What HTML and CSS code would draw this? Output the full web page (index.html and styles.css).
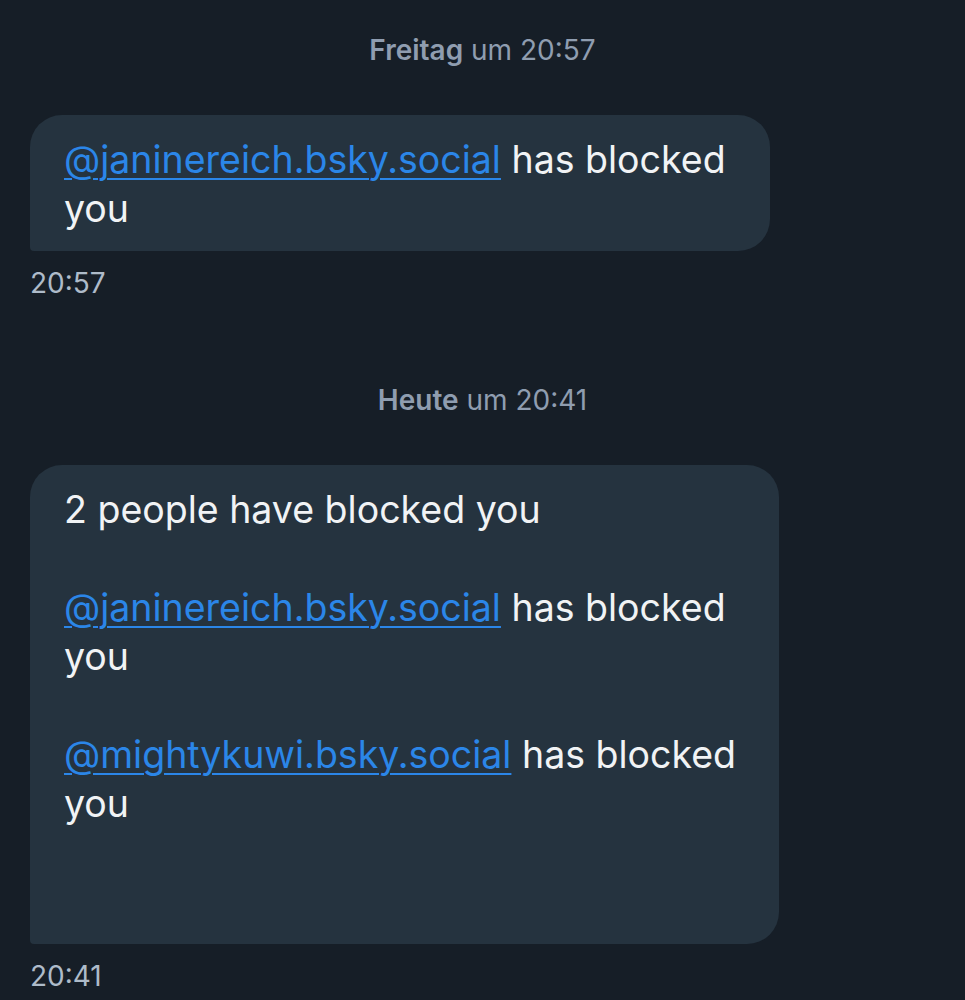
FILE: index.html
```html
<!DOCTYPE html>
<html>
<head>
  <meta charset="utf-8">
  <title>Chat</title>
  <meta name="viewport" content="width=device-width, initial-scale=1">
  <link rel="stylesheet" href="styles.css">
</head>
<body>
  <div class="chat">
    <div class="day">
      <p class="date"><b>Freitag</b> um 20:57</p>
      <div class="bubble bubble-short">
        <p class="msg"><a href="#" class="mention">@janinereich.bsky.social</a> has blocked you</p>
      </div>
      <p class="time">20:57</p>
    </div>
    <div class="day">
      <p class="date"><b>Heute</b> um 20:41</p>
      <div class="bubble">
        <p class="msg">2 people have blocked you<br><br><a href="#" class="mention">@janinereich.bsky.social</a> has blocked you<br><br><a href="#" class="mention">@mightykuwi.bsky.social</a> has blocked you<br><br><br></p>
      </div>
      <p class="time">20:41</p>
    </div>
  </div>
</body>
</html>
```

FILE: styles.css
```css
html {
  font-family: Inter, "Noto Sans", sans-serif;
  background-color: #161e27;
}
body {
  margin: 0;
}
p {
  margin: 0;
}
.chat {
  padding: 28px 30px 0 30px;
}
.day {
  margin-bottom: 80px;
}
.day:last-child {
  margin-bottom: 0;
}
.date {
  font-size: 28px;
  line-height: 44px;
  text-align: center;
  color: #8f9db0;
  margin-bottom: 43px;
}
.date b {
  font-weight: 600;
}
.bubble {
  width: fit-content;
  max-width: 749px;
  box-sizing: border-box;
  padding: 20px 38px 18px 34px;
  background-color: #25333f;
  border-radius: 32px 32px 32px 4px;
}
.bubble-short {
  max-width: 740px;
}
.msg {
  font-size: 37.5px;
  line-height: 49px;
  color: #f1f3f5;
}
.mention {
  color: #2b86e8;
  text-decoration: underline;
  text-decoration-thickness: 2px;
  text-underline-offset: 5px;
}
.time {
  margin-top: 17px;
  font-size: 28px;
  line-height: 30px;
  color: #aebbc9;
}
```
